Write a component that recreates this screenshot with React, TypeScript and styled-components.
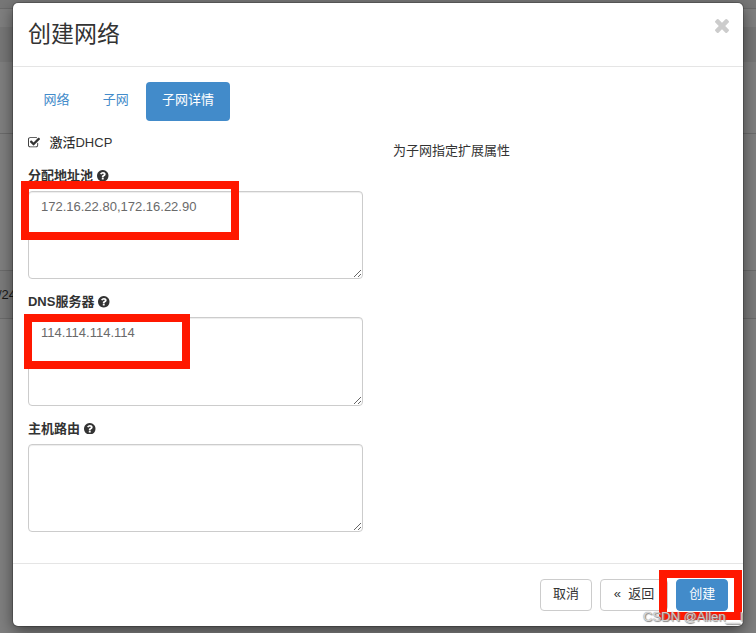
import React from 'react';
import styled, { createGlobalStyle } from 'styled-components';

const GlobalStyle = createGlobalStyle`
  *, *::before, *::after { box-sizing: border-box; }
  html, body { margin: 0; padding: 0; overflow: hidden; }
  body {
    font: 13px/18px 'Liberation Sans', 'Noto Sans CJK SC', sans-serif;
    color: #333;
  }
`;

const Page = styled.div`
  position: relative;
  width: 756px;
  height: 633px;
  overflow: hidden;
  padding: 3px 12.5px 0 13.4px;
  background: #7f7f7f;
`;

const Backdrop = styled.div`
  position: absolute;
  inset: 0;
  display: flex;
  flex-direction: column;
`;

const Band = styled.div<{ $h: number; $bg?: string; $line?: boolean }>`
  flex: none;
  height: ${p => p.$h}px;
  background: ${p => p.$bg || 'transparent'};
  border-bottom: ${p => (p.$line ? '1px solid #6b6b6b' : '0')};
  line-height: ${p => p.$h - 1}px;
  color: #1a1a1a;
  text-indent: -2px;
`;

const Dialog = styled.section`
  position: relative;
  width: 730px;
  height: 623px;
  display: flex;
  flex-direction: column;
  background: #fff;
  border-radius: 5px;
  box-shadow: 0 0 0 1px rgba(0, 0, 0, 0.2), 0 5px 15px rgba(0, 0, 0, 0.5);
`;

const Header = styled.header`
  display: flex;
  justify-content: space-between;
  height: 64px;
  padding: 15px 14.5px;
  border-bottom: 1px solid #e5e5e5;
`;

const Title = styled.h3`
  margin: 0;
  font-size: 23px;
  font-weight: 400;
  line-height: 33px;
`;

const Close = styled.button`
  width: 14px;
  height: 14px;
  margin-top: 1px;
  padding: 0;
  border: 0;
  background: none;
  color: #ccc;
  svg { display: block; }
`;

const Body = styled.div`
  flex: 1;
  padding: 15px 14.6px;
`;

const Tabs = styled.nav`
  display: flex;
  gap: 2px;
`;

const Tab = styled.a<{ $active?: boolean }>`
  height: 39px;
  padding: 0 15.6px;
  line-height: 36px;
  border-radius: 4px;
  color: ${p => (p.$active ? '#fff' : '#428bca')};
  background: ${p => (p.$active ? '#428bca' : 'transparent')};
`;

const Columns = styled.div`
  display: grid;
  grid-template-columns: 335.5px 1fr;
  column-gap: 29.5px;
`;

const Form = styled.div`
  padding-top: 12px;
`;

const CheckRow = styled.label`
  display: flex;
  align-items: center;
  gap: 9.5px;
  height: 19px;
  font-weight: 500;
`;

const Field = styled.div`
  height: 126.6px;
`;

const FieldSet = styled.div`
  padding-top: 14px;
`;

const Label = styled.label`
  display: flex;
  align-items: center;
  gap: 4px;
  height: 19px;
  margin-bottom: 5.8px;
  font-weight: 700;
`;

const Area = styled.textarea`
  display: block;
  width: 335.5px;
  height: 88.5px;
  padding: 6px 12px;
  border: 1px solid #ccc;
  border-radius: 4px;
  outline: 0;
  resize: vertical;
  font: inherit;
  color: #6a6a6a;
  background: #fff;
  box-shadow: inset 0 1px 1px rgba(0, 0, 0, 0.075);
`;

const Help = styled.p`
  margin: 20.5px 0 0;
`;

const Footer = styled.footer`
  display: flex;
  justify-content: flex-end;
  height: 63px;
  padding: 15px 15px;
  border-top: 1px solid #e5e5e5;
`;

const Button = styled.button<{ $primary?: boolean; $wide?: boolean }>`
  width: ${p => (p.$wide ? 68 : 52.5)}px;
  height: 32px;
  margin-left: 7.8px;
  padding: 0 0 2px;
  border: 1px solid ${p => (p.$primary ? '#428bca' : '#ccc')};
  border-radius: 4px;
  font: inherit;
  white-space: pre;
  color: ${p => (p.$primary ? '#fff' : '#333')};
  background: ${p => (p.$primary ? '#428bca' : '#fff')};
`;

const Highlight = styled.div<{ $x: number; $y: number; $w: number; $h: number }>`
  position: absolute;
  left: ${p => p.$x}px;
  top: ${p => p.$y}px;
  width: ${p => p.$w}px;
  height: ${p => p.$h}px;
  border: 8px solid #ff1800;
  pointer-events: none;
`;

const Watermark = styled.span`
  position: absolute;
  left: 643px;
  top: 609px;
  font: 13px/16px 'Liberation Sans', sans-serif;
  color: rgba(255, 255, 255, 0.7);
  text-shadow: 0 0 1px #666, 1px 1px 1px #888;
  white-space: nowrap;
`;

const glyphs = {
  question:
    'M1024 1376v-192q0-14-9-23t-23-9h-192q-14 0-23 9t-9 23v192q0 14 9 23t23 9h192q14 0 23-9t9-23zm256-672q0-88-55.5-163t-138.5-116-170-41q-243 0-371 213-15 24 8 42l132 100q7 6 19 6 16 0 25-12 53-68 86-92 34-24 86-24 48 0 85.5 26t37.5 59q0 38-20 61t-68 45q-63 28-115.5 86.5t-52.5 125.5v36q0 14 9 23t23 9h192q14 0 23-9t9-23q0-19 21.5-49.5t54.5-49.5q32-18 49-28.5t46-35 44.5-48 28-60.5 12.5-81zm384 192q0 209-103 385.5t-279.5 279.5-385.5 103-385.5-103-279.5-279.5-103-385.5 103-385.5 279.5-279.5 385.5-103 385.5 103 279.5 279.5 103 385.5z',
  check:
    'M1472 930v318q0 119-84.5 203.5t-203.5 84.5h-832q-119 0-203.5-84.5t-84.5-203.5v-832q0-119 84.5-203.5t203.5-84.5h832q63 0 117 25 15 7 18 23 3 17-9 29l-49 49q-10 10-23 10-3 0-9-2-23-6-45-6h-832q-66 0-113 47t-47 113v832q0 66 47 113t113 47h832q66 0 113-47t47-113v-254q0-13 9-22l64-64q10-10 23-10 6 0 12 3 20 8 20 29zm231-489l-814 814q-24 24-57 24t-57-24l-430-430q-24-24-24-57t24-57l110-110q24-24 57-24t57 24l263 263 647-647q24-24 57-24t57 24l110 110q24 24 24 57t-24 57z',
  times:
    'M1490 1322q0 40-28 68l-136 136q-28 28-68 28t-68-28l-294-294-294 294q-28 28-68 28t-68-28l-136-136q-28-28-28-68t28-68l294-294-294-294q-28-28-28-68t28-68l136-136q28-28 68-28t68 28l294 294 294-294q28-28 68-28t68 28l136 136q28 28 28 68t-28 68l-294 294 294 294q28 28 28 68z',
};

const viewBoxes = {
  question: '128 128 1536 1536',
  check: '64 128 1664 1408',
  times: '302 366 1188 1188',
};

function Icon({ name, w, h }: { name: keyof typeof glyphs; w: number; h: number }) {
  return (
    <svg width={w} height={h} viewBox={viewBoxes[name]} fill="currentColor" aria-hidden="true">
      <path d={glyphs[name]} />
    </svg>
  );
}

const fields = [
  { label: '分配地址池', value: '172.16.22.80,172.16.22.90' },
  { label: 'DNS服务器', value: '114.114.114.114' },
  { label: '主机路由', value: '' },
];

export default function App() {
  return (
    <>
      <GlobalStyle />
      <Page>
        <Backdrop>
          <Band $h={9} $bg="#777" $line />
          <Band $h={18} />
          <Band $h={35} $bg="#777" />
          <Band $h={72} $line />
          <Band $h={137} $line />
          <Band $h={48} $bg="#7b7b7b" $line>/24</Band>
        </Backdrop>
        <Dialog>
          <Header>
            <Title>创建网络</Title>
            <Close aria-label="Close"><Icon name="times" w={14} h={14} /></Close>
          </Header>
          <Body>
            <Tabs>
              <Tab>网络</Tab>
              <Tab>子网</Tab>
              <Tab $active>子网详情</Tab>
            </Tabs>
            <Columns>
              <Form>
                <CheckRow><Icon name="check" w={12} h={10.5} />激活DHCP</CheckRow>
                <FieldSet>
                  {fields.map(f => (
                    <Field key={f.label}>
                      <Label>{f.label}<Icon name="question" w={11.5} h={11.5} /></Label>
                      <Area defaultValue={f.value} spellCheck={false} />
                    </Field>
                  ))}
                </FieldSet>
              </Form>
              <Help>为子网指定扩展属性</Help>
            </Columns>
          </Body>
          <Footer>
            <Button>取消</Button>
            <Button $wide>«  返回</Button>
            <Button $primary>创建</Button>
          </Footer>
        </Dialog>
        <Highlight $x={21} $y={181} $w={218.4} $h={59} />
        <Highlight $x={24.4} $y={314} $w={166} $h={55} />
        <Highlight $x={659.4} $y={570} $w={83} $h={50} />
        <Watermark>CSDN @Allen__l</Watermark>
      </Page>
    </>
  );
}
